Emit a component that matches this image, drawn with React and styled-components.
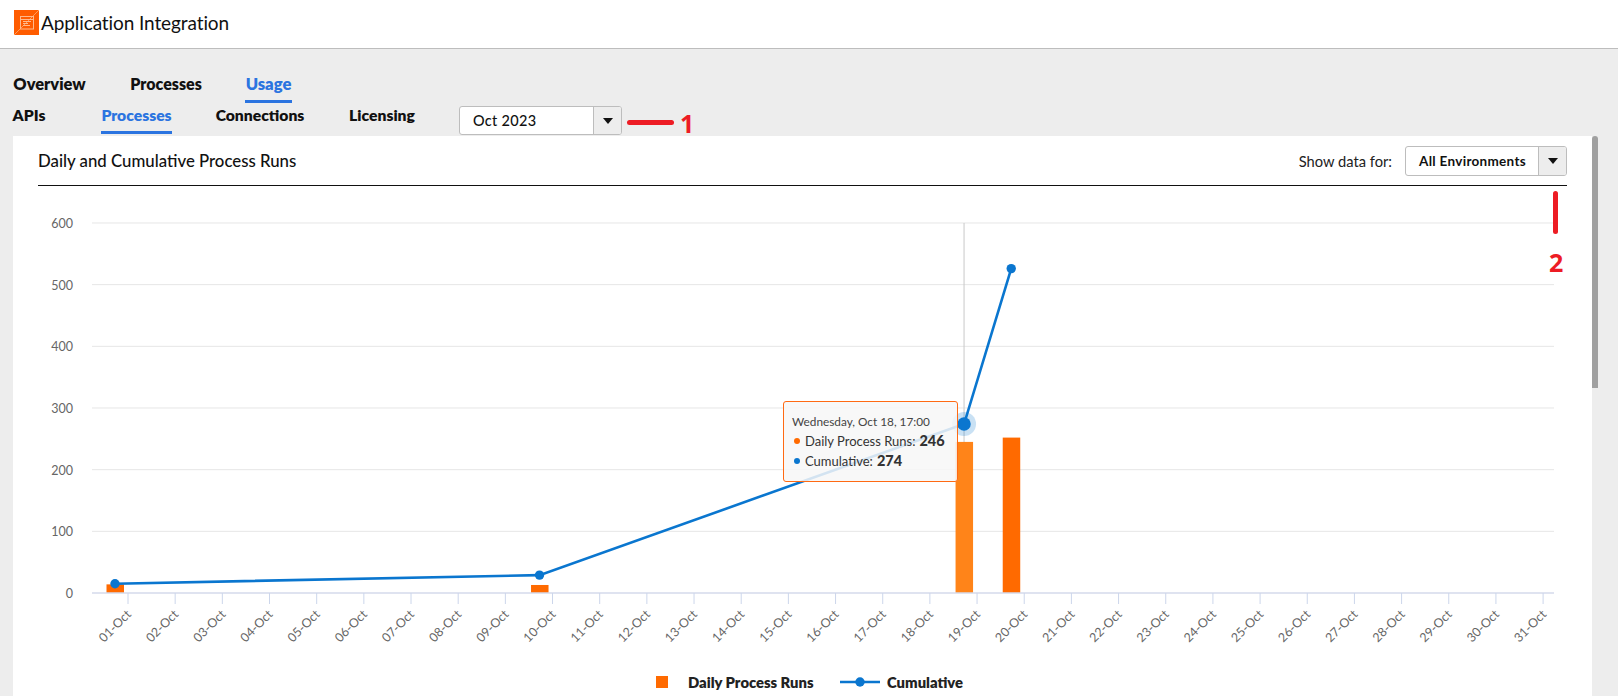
import React from "react";
import styled, { createGlobalStyle } from "styled-components";

const FONT = `"Lato", "Open Sans", "Liberation Sans", sans-serif`;

const Global = createGlobalStyle`
  html, body { margin: 0; padding: 0; height: 696px; overflow: hidden; background: #ededed; }
  body { font-family: ${FONT}; color: #111; }
  * { box-sizing: border-box; }
`;

const Page = styled.div`
  width: 1618px;
  height: 696px;
  display: flex;
  flex-direction: column;
  overflow: hidden;
`;
const Header = styled.header`
  height: 49px;
  flex: none;
  background: #fff;
  border-bottom: 1px solid #bdbdbd;
  display: flex;
  align-items: center;
  padding: 0 0 3px 14px;
  gap: 2px;
`;
const Title = styled.h1`
  margin: 0;
  font-size: 19px;
  font-weight: 400;
  color: #111;
  letter-spacing: -0.1px;
`;
const Nav = styled.nav`
  height: 87px;
  flex: none;
  display: flex;
  flex-direction: column;
  padding: 25px 0 0 13px;
`;
const TabRow = styled.div`
  display: flex;
  height: ${(p) => p.$h}px;
`;
const Tab = styled.div`
  font-size: ${(p) => p.$size || 15.7}px;
  font-weight: 800;
  width: ${(p) => p.$w}px;
  margin-right: ${(p) => p.$gap}px;
  display: flex;
  justify-content: center;
  height: 29px;
  line-height: 20px;
  color: ${(p) => (p.$active ? "#2b74e0" : "#111")};
  border-bottom: 3px solid ${(p) => (p.$active ? "#2b74e0" : "transparent")};
  white-space: nowrap;
`;
const SelectBox = styled.div`
  display: flex;
  width: ${(p) => p.$w}px;
  height: ${(p) => p.$h}px;
  border: 1px solid #bdbdbd;
  border-radius: 3px;
  background: #fff;
  flex: none;
`;
const SelectValue = styled.div`
  flex: 1;
  font-size: ${(p) => p.$size}px;
  font-weight: ${(p) => p.$weight};
  line-height: ${(p) => p.$h - 2}px;
  padding-left: ${(p) => p.$pad}px;
  color: #111;
  letter-spacing: 0.3px;
  white-space: nowrap;
`;
const SelectArrow = styled.div`
  width: 28px;
  background: #ededed;
  border-left: 1px solid #bdbdbd;
  display: flex;
  align-items: center;
  justify-content: center;
  border-radius: 0 2px 2px 0;
  &::after {
    content: "";
    border-left: 5px solid transparent;
    border-right: 5px solid transparent;
    border-top: 6px solid #111;
  }
`;
const MonthSlot = styled.div`
  margin: 1px 0 0 43px;
  display: flex;
  align-items: flex-start;
`;
const Dash = styled.div`
  width: 47px;
  height: 5px;
  background: #ed1c24;
  border-radius: 3px;
  margin: 14px 6px 0 5px;
`;
const Mark = styled.span`
  color: #ed1c24;
  font-family: "Open Sans", sans-serif;
  font-weight: 700;
  font-size: 25px;
  line-height: 24px;
`;
const MarkOne = styled(Mark)`
  margin-top: 5px;
`;
const Body = styled.div`
  flex: 1;
  display: flex;
  padding-left: 13px;
  min-height: 0;
`;
const Panel = styled.main`
  width: 1579px;
  background: #fff;
  padding: 10px 25px 0 25px;
  position: relative;
  flex: none;
`;
const Scrollbar = styled.div`
  width: 6px;
  height: 252px;
  background: #a0a0a0;
  border-radius: 3px 3px 0 0;
  flex: none;
`;
const PanelHead = styled.div`
  display: flex;
  align-items: center;
  height: 40px;
  border-bottom: 1px solid #111;
  padding-bottom: 9px;
`;
const PanelTitle = styled.h2`
  margin: -2px 0 0;
  font-size: 16.8px;
  font-weight: 500;
  color: #111;
  flex: 1;
`;
const ShowLabel = styled.span`
  font-size: 14.7px;
  margin-right: 13px;
  color: #222;
`;
const Chart = styled.div`
  position: relative;
  margin: 0 0 0 -38px;
  width: 1579px;
  height: 470px;
`;
const ChartSvg = styled.svg`
  display: block;
  font-family: ${FONT};
`;
const Tooltip = styled.div`
  position: absolute;
  left: 783px;
  top: 215px;
  width: 175px;
  height: 81px;
  background: rgba(247, 247, 247, 0.85);
  border: 1px solid #ff6a13;
  border-radius: 3px;
  padding: 10px 8px;
  color: #333;
`;
const TipDate = styled.div`
  font-size: 11.8px;
  line-height: 19px;
  color: #444;
`;
const TipRow = styled.div`
  display: flex;
  align-items: center;
  font-size: 13px;
  line-height: 20px;
  white-space: nowrap;
  b {
    font-weight: 900;
    font-size: 14.5px;
    margin-left: 4px;
  }
`;
const TipDot = styled.i`
  width: 6px;
  height: 6px;
  border-radius: 50%;
  background: ${(p) => p.$c};
  margin: 0 5px 0 2px;
  flex: none;
`;
const RedBar = styled.div`
  position: absolute;
  left: 1553px;
  top: 5px;
  width: 5px;
  height: 43px;
  background: #ed1c24;
  border-radius: 3px;
`;
const MarkTwo = styled(Mark)`
  position: absolute;
  left: 1549px;
  top: 64px;
`;
const Legend = styled.div`
  position: absolute;
  left: 656px;
  top: 486px;
  display: flex;
  align-items: center;
  height: 20px;
  font-size: 14.8px;
  font-weight: 800;
  color: #222;
`;
const LegendSwatch = styled.i`
  width: 12px;
  height: 12px;
  background: #ff6a00;
  margin-right: 20px;
`;
const LegendName = styled.span`
  width: ${(p) => p.$w}px;
  white-space: nowrap;
`;
const LegendLine = styled.svg`
  margin: 0 7px 0 25px;
`;

const Logo = () => (
  <svg width="25" height="25" viewBox="0 0 25 25">
    <rect width="25" height="25" fill="#ff5c00" />
    <path d="M0 25L25 0" stroke="#ff9a5c" strokeWidth="1" />
    <g fill="none" stroke="#ffb98c" strokeWidth="1">
      <rect x="6.5" y="6.5" width="13" height="12.5" />
      <path d="M6.5 9.5h13M9 11.5h8M9 13.5h5M9 15.5h7" />
    </g>
  </svg>
);

const X0 = 115;
const STEP = 47.17;
const Y = (v) => 593 - v * 0.6167;
const OFF = 186;
const px = (i) => X0 + STEP * i;
const py = (v) => Y(v) - OFF;
const days = Array.from({ length: 31 }, (_, i) => String(i + 1).padStart(2, "0") + "-Oct");
const barData = [
  [0, 14, "#ff6a00"],
  [9, 13, "#ff6a00"],
  [18, 245, "#ff8419"],
  [19, 252, "#ff6a00"],
];
const linePts = [
  [0, 15],
  [9, 29],
  [18, 274],
  [19, 526],
];

const ChartDrawing = () => (
  <ChartSvg width="1579" height="470" viewBox="0 0 1579 470">
    {[100, 200, 300, 400, 500, 600].map((v) => (
      <line key={v} x1="92" x2="1554" y1={py(v)} y2={py(v)} stroke="#e6e6e6" />
    ))}
    {[0, 100, 200, 300, 400, 500, 600].map((v) => (
      <text key={v} x="73" y={py(v) + 5} textAnchor="end" fontSize="12.5" fill="#666">
        {v}
      </text>
    ))}
    <line x1={px(18)} x2={px(18)} y1={py(600)} y2={py(0)} stroke="#c8c8c8" strokeWidth="1" />
    {barData.map(([i, v, c]) => (
      <rect key={i} x={px(i) - 8.5} width="17.5" y={py(v)} height={v * 0.6167} fill={c} />
    ))}
    <line x1="92" x2="1554" y1={py(0)} y2={py(0)} stroke="#d4daeb" strokeWidth="1.6" />
    {days.map((d, i) => {
      const tx = 128 + STEP * i;
      return (
        <g key={d}>
          <line x1={tx} x2={tx} y1={py(0)} y2={py(0) + 11} stroke="#ccd6eb" strokeWidth="1" />
          <text
            x={tx + 4}
            y={py(0) + 22}
            textAnchor="end"
            fontSize="12.5"
            fill="#666"
            transform={`rotate(-45 ${tx + 4} ${py(0) + 22})`}
          >
            {d}
          </text>
        </g>
      );
    })}
    <polyline
      points={linePts.map(([i, v]) => `${px(i)},${py(v)}`).join(" ")}
      fill="none"
      stroke="#0a76cf"
      strokeWidth="2.6"
    />
    <circle cx={px(18)} cy={py(274)} r="12" fill="#0a76cf" opacity="0.22" />
    {linePts.map(([i, v]) => (
      <circle key={i} cx={px(i)} cy={py(v)} r={i === 18 ? 6.7 : 4.7} fill="#0a76cf" />
    ))}
  </ChartSvg>
);

export default function App() {
  return (
    <Page>
      <Global />
      <Header>
        <Logo />
        <Title>Application Integration</Title>
      </Header>
      <Nav>
        <TabRow $h={31}>
          <Tab $w={73} $gap={45} $size={16.4}>Overview</Tab>
          <Tab $w={70} $gap={44} $size={16}>Processes</Tab>
          <Tab $w={47} $gap={0} $size={16.6} $active>Usage</Tab>
        </TabRow>
        <TabRow $h={30}>
          <Tab $w={32} $gap={56}>APIs</Tab>
          <Tab $w={71} $gap={44} $active>Processes</Tab>
          <Tab $w={88} $gap={44}>Connections</Tab>
          <Tab $w={68} $gap={0}>Licensing</Tab>
          <MonthSlot>
            <SelectBox $w={163} $h={29}>
              <SelectValue $size={14.5} $weight={500} $h={29} $pad={13}>Oct 2023</SelectValue>
              <SelectArrow />
            </SelectBox>
            <Dash />
            <MarkOne>1</MarkOne>
          </MonthSlot>
        </TabRow>
      </Nav>
      <Body>
        <Panel>
          <PanelHead>
            <PanelTitle>Daily and Cumulative Process Runs</PanelTitle>
            <ShowLabel>Show data for:</ShowLabel>
            <SelectBox $w={162} $h={30}>
              <SelectValue $size={13.5} $weight={700} $h={30} $pad={13}>All Environments</SelectValue>
              <SelectArrow />
            </SelectBox>
          </PanelHead>
          <Chart>
            <ChartDrawing />
            <Tooltip>
              <TipDate>Wednesday, Oct 18, 17:00</TipDate>
              <TipRow><TipDot $c="#ff6a00" />Daily Process Runs: <b>246</b></TipRow>
              <TipRow><TipDot $c="#0a76cf" />Cumulative: <b>274</b></TipRow>
            </Tooltip>
            <RedBar />
            <MarkTwo>2</MarkTwo>
            <Legend>
              <LegendSwatch />
              <LegendName $w={127}>Daily Process Runs</LegendName>
              <LegendLine width="40" height="12" viewBox="0 0 40 12">
                <line x1="0" x2="40" y1="6" y2="6" stroke="#0a76cf" strokeWidth="2.4" />
                <circle cx="20" cy="6" r="4.7" fill="#0a76cf" />
              </LegendLine>
              <LegendName $w={80}>Cumulative</LegendName>
            </Legend>
          </Chart>
        </Panel>
        <Scrollbar />
      </Body>
    </Page>
  );
}
